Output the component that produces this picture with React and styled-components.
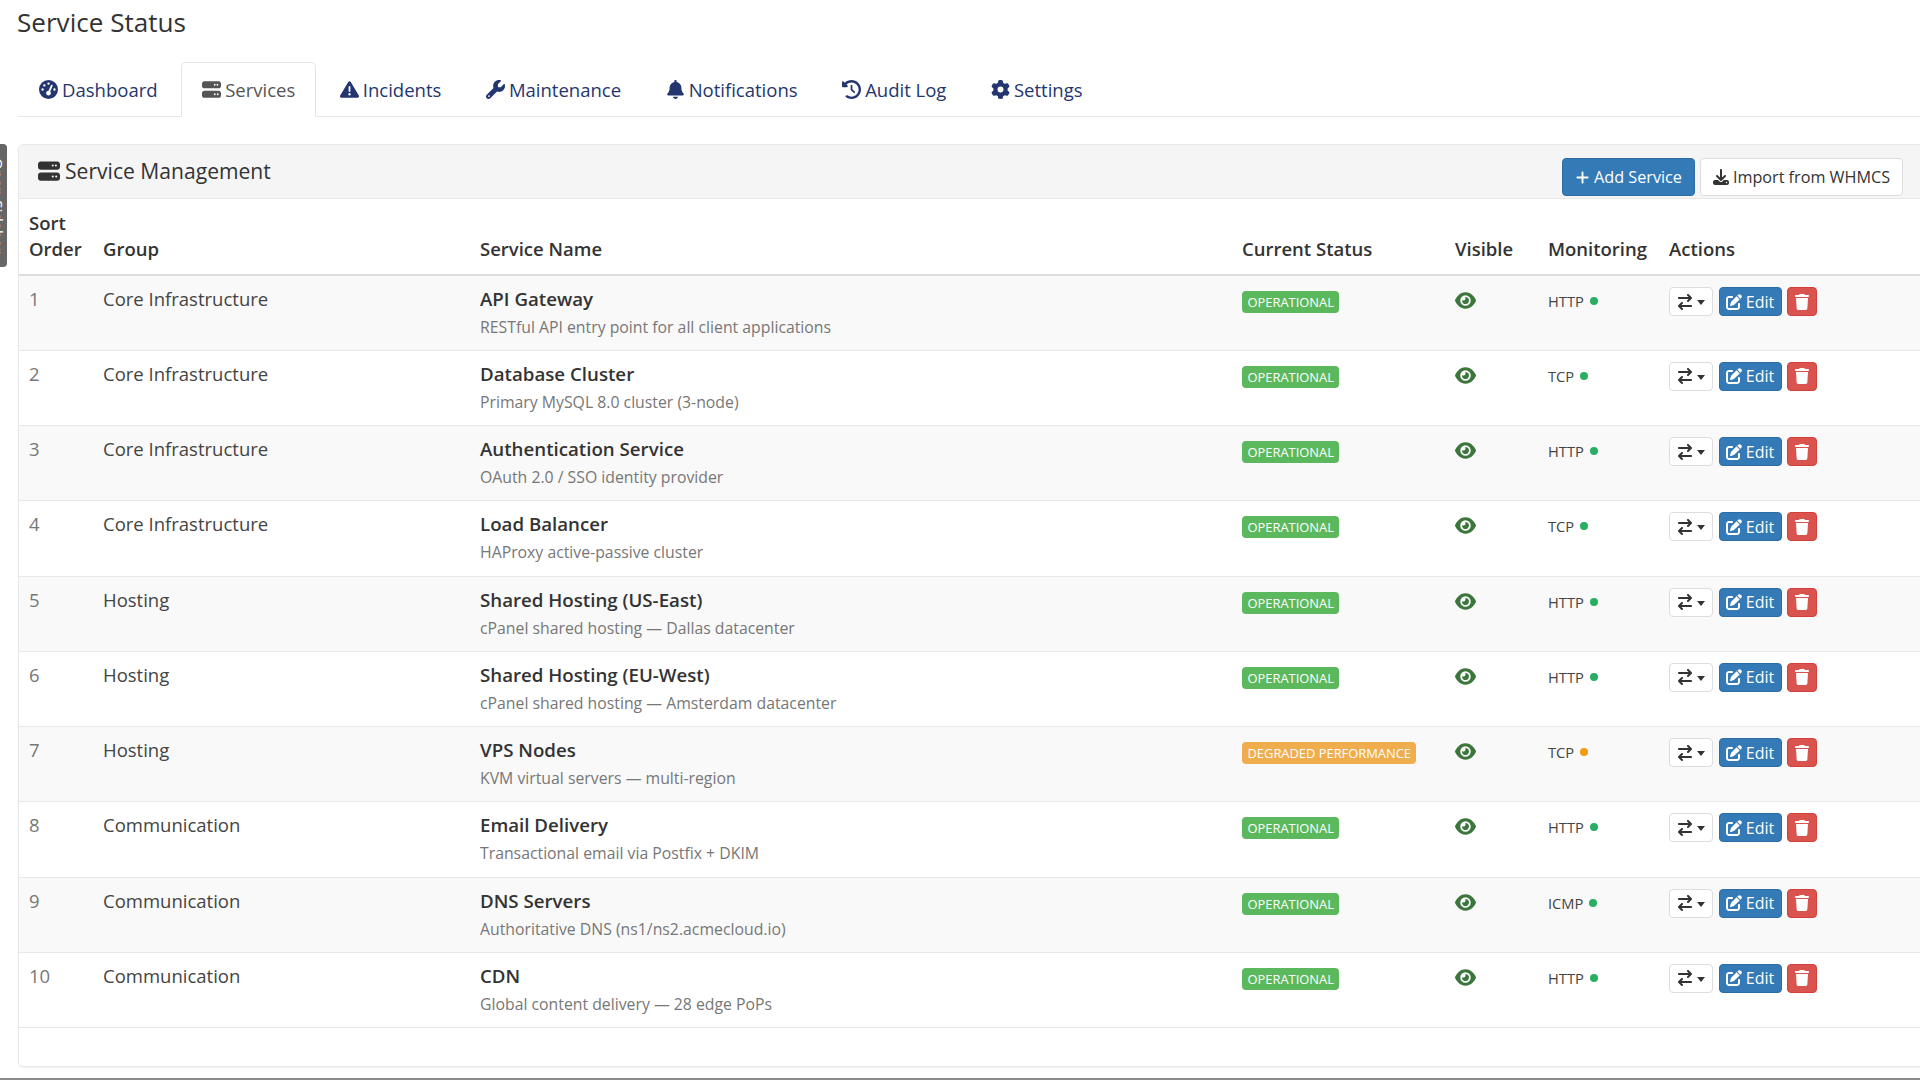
import styled, { createGlobalStyle } from "styled-components";
import {
  FaGaugeHigh,
  FaServer,
  FaTriangleExclamation,
  FaWrench,
  FaBell,
  FaClockRotateLeft,
  FaGear,
  FaPlus,
  FaDownload,
  FaArrowRightArrowLeft,
  FaPenToSquare,
  FaTrash,
  FaEye,
} from "react-icons/fa6";

const GlobalStyle = createGlobalStyle`
  html, body {
    margin: 0;
    padding: 0;
    width: 1920px;
    height: 1080px;
    overflow: hidden;
    background: #fff;
    font-family: "Open Sans", "Liberation Sans", sans-serif;
    font-size: 18.5px;
    color: #333;
  }
  * { box-sizing: border-box; }
`;

const Page = styled.div`
  height: 1080px;
  padding: 0 0 0 18px;
  border-bottom: 2px solid #8a8a8a;
  position: relative;
  overflow: hidden;
`;

const SideTab = styled.div`
  position: absolute;
  left: 0;
  top: 144px;
  width: 7px;
  height: 123px;
  background: #666;
  border-radius: 0 4px 4px 0;
  overflow: hidden;
  span {
    display: block;
    width: 22px;
    margin-left: -13.5px;
    height: 123px;
    writing-mode: vertical-rl;
    text-align: center;
    color: #fff;
    font-size: 15px;
    line-height: 22px;
  }
`;

const Title = styled.h2`
  margin: 0 0 0 -1px;
  height: 62px;
  padding-top: 2px;
  font-size: 26.1px;
  line-height: 40px;
  font-weight: 400;
  color: #333;
`;

const Tabs = styled.ul`
  display: flex;
  list-style: none;
  margin: 0 0 27px;
  padding: 0;
  height: 55px;
  border-bottom: 1.2px solid #e8e8e8;
`;

const Tab = styled.li`
  display: flex;
  align-items: center;
  gap: 4px;
  height: 55px;
  padding: 0 20.1px;
  margin-right: 2.4px;
  border: 1.2px solid ${(p) => (p.$active ? "#e4e4e4" : "transparent")};
  border-bottom-color: ${(p) => (p.$active ? "#fff" : "transparent")};
  border-radius: 5px 5px 0 0;
  background: ${(p) => (p.$active ? "#fff" : "transparent")};
  color: ${(p) => (p.$active ? "#555" : "#23366f")};
  font-size: 18.5px;
  svg {
    font-size: 19px;
  }
`;

const Panel = styled.section`
  width: 1940px;
  height: 923px;
  border: 1.2px solid #e8e8e8;
  border-radius: 5px;
  box-shadow: 0 1px 2px rgba(0, 0, 0, 0.06);
`;

const PanelHeading = styled.div`
  display: flex;
  align-items: flex-start;
  justify-content: space-between;
  height: 54px;
  padding: 12px 54px 0 19px;
  background: #f5f5f5;
  border-bottom: 1.2px solid #e8e8e8;
`;

const PanelTitle = styled.h3`
  display: flex;
  align-items: center;
  gap: 5px;
  margin: 0;
  font-size: 21.1px;
  line-height: 28px;
  font-weight: 400;
  color: #333;
  svg {
    font-size: 22px;
  }
`;

const HeadActions = styled.div`
  display: flex;
  gap: 5px;
  margin-top: 1px;
`;

const Button = styled.button`
  display: inline-flex;
  align-items: center;
  justify-content: center;
  gap: 4px;
  font-family: inherit;
  font-size: ${(p) => (p.$small ? "16px" : "16.2px")};
  height: ${(p) => (p.$small ? "29px" : "38px")};
  width: ${(p) => p.$width};
  padding: 0;
  border-radius: 4px;
  border: 1.2px solid ${(p) => p.$border};
  background: ${(p) => p.$bg};
  color: ${(p) => p.$color};
  svg {
    flex: none;
  }
`;

const Caret = styled.span`
  width: 0;
  height: 0;
  border-left: 4.5px solid transparent;
  border-right: 4.5px solid transparent;
  border-top: 5px solid #333;
  margin-top: 2px;
`;

const Table = styled.table`
  width: 1920px;
  table-layout: fixed;
  border-collapse: collapse;
  border-spacing: 0;
`;

const Th = styled.th`
  height: 76px;
  padding: 0 0 12px 10px;
  vertical-align: bottom;
  text-align: left;
  font-size: 18.5px;
  line-height: 26px;
  font-weight: 600;
  color: #333;
  border-bottom: 2.4px solid #ddd;
`;

const Row = styled.tr`
  height: 75.25px;
  background: ${(p) => (p.$odd ? "#f9f9f9" : "#fff")};
  border-bottom: 1.2px solid #e8e8e8;
`;

const Td = styled.td`
  padding: 11px 0 0 10px;
  vertical-align: top;
  line-height: 23px;
  color: ${(p) => (p.$muted ? "#777" : "#444")};
`;

const ServiceName = styled.div`
  font-weight: 600;
  font-size: 18.7px;
  line-height: 25px;
  color: #333;
  margin-top: -1px;
`;

const ServiceDesc = styled.div`
  margin-top: 5px;
  font-size: 15.8px;
  line-height: 22px;
  color: #777;
`;

const Badge = styled.span`
  display: inline-block;
  margin-top: 4px;
  height: 22px;
  padding: 0 5.5px;
  border-radius: 4px;
  background: ${(p) => p.$bg};
  color: #fff;
  font-size: 12.9px;
  line-height: 22px;
  vertical-align: top;
`;

const VisibleIcon = styled(FaEye)`
  display: block;
  margin-top: 3px;
  font-size: 21px;
  color: #3c763d;
`;

const Monitor = styled.div`
  display: flex;
  align-items: center;
  gap: 6px;
  margin-top: 3px;
  font-size: 14.7px;
  line-height: 22px;
  color: #444;
`;

const Dot = styled.span`
  width: 8px;
  height: 8px;
  border-radius: 50%;
  background: ${(p) => p.$color};
`;

const Actions = styled.div`
  display: flex;
  gap: 5.5px;
`;

const tabs = [
  ["Dashboard", FaGaugeHigh],
  ["Services", FaServer],
  ["Incidents", FaTriangleExclamation],
  ["Maintenance", FaWrench],
  ["Notifications", FaBell],
  ["Audit Log", FaClockRotateLeft],
  ["Settings", FaGear],
];

const services = [
  ["Core Infrastructure", "API Gateway", "RESTful API entry point for all client applications", "HTTP"],
  ["Core Infrastructure", "Database Cluster", "Primary MySQL 8.0 cluster (3-node)", "TCP"],
  ["Core Infrastructure", "Authentication Service", "OAuth 2.0 / SSO identity provider", "HTTP"],
  ["Core Infrastructure", "Load Balancer", "HAProxy active-passive cluster", "TCP"],
  ["Hosting", "Shared Hosting (US-East)", "cPanel shared hosting — Dallas datacenter", "HTTP"],
  ["Hosting", "Shared Hosting (EU-West)", "cPanel shared hosting — Amsterdam datacenter", "HTTP"],
  ["Hosting", "VPS Nodes", "KVM virtual servers — multi-region", "TCP", true],
  ["Communication", "Email Delivery", "Transactional email via Postfix + DKIM", "HTTP"],
  ["Communication", "DNS Servers", "Authoritative DNS (ns1/ns2.acmecloud.io)", "ICMP"],
  ["Communication", "CDN", "Global content delivery — 28 edge PoPs", "HTTP"],
];

const App = () => {
  return (
    <Page>
      <GlobalStyle />
      <SideTab>
        <span>Open Sidebar</span>
      </SideTab>
      <Title>Service Status</Title>
      <Tabs>
        {tabs.map(([label, Icon]) => (
          <Tab key={label} $active={label === "Services"}>
            <Icon />
            {label}
          </Tab>
        ))}
      </Tabs>
      <Panel>
        <PanelHeading>
          <PanelTitle>
            <FaServer />
            Service Management
          </PanelTitle>
          <HeadActions>
            <Button $width="133px" $bg="#337ab7" $border="#2e6da4" $color="#fff">
              <FaPlus size={15} />
              Add Service
            </Button>
            <Button $width="203px" $bg="#fff" $border="#ddd" $color="#333">
              <FaDownload size={16} />
              Import from WHMCS
            </Button>
          </HeadActions>
        </PanelHeading>
        <Table>
          <colgroup>
            <col style={{ width: 74 }} />
            <col style={{ width: 377 }} />
            <col style={{ width: 762 }} />
            <col style={{ width: 213 }} />
            <col style={{ width: 93 }} />
            <col style={{ width: 121 }} />
            <col />
          </colgroup>
          <thead>
            <tr>
              <Th>Sort Order</Th>
              <Th>Group</Th>
              <Th>Service Name</Th>
              <Th>Current Status</Th>
              <Th>Visible</Th>
              <Th>Monitoring</Th>
              <Th>Actions</Th>
            </tr>
          </thead>
          <tbody>
            {services.map(([group, name, desc, proto, degraded], i) => (
              <Row key={name} $odd={i % 2 === 0}>
                <Td $muted>{i + 1}</Td>
                <Td>{group}</Td>
                <Td>
                  <ServiceName>{name}</ServiceName>
                  <ServiceDesc>{desc}</ServiceDesc>
                </Td>
                <Td>
                  <Badge $bg={degraded ? "#f0ad4e" : "#5cb85c"}>
                    {degraded ? "DEGRADED PERFORMANCE" : "OPERATIONAL"}
                  </Badge>
                </Td>
                <Td>
                  <VisibleIcon />
                </Td>
                <Td>
                  <Monitor>
                    {proto}
                    <Dot $color={degraded ? "#f39c12" : "#27ae60"} />
                  </Monitor>
                </Td>
                <Td>
                  <Actions>
                    <Button $small $width="44px" $bg="#fff" $border="#ddd" $color="#333">
                      <FaArrowRightArrowLeft size={16} />
                      <Caret />
                    </Button>
                    <Button $small $width="63px" $bg="#337ab7" $border="#2e6da4" $color="#fff">
                      <FaPenToSquare size={16} />
                      Edit
                    </Button>
                    <Button $small $width="30px" $bg="#d9534f" $border="#d43f3a" $color="#fff">
                      <FaTrash size={16} />
                    </Button>
                  </Actions>
                </Td>
              </Row>
            ))}
          </tbody>
        </Table>
      </Panel>
    </Page>
  );
};

export default App;
